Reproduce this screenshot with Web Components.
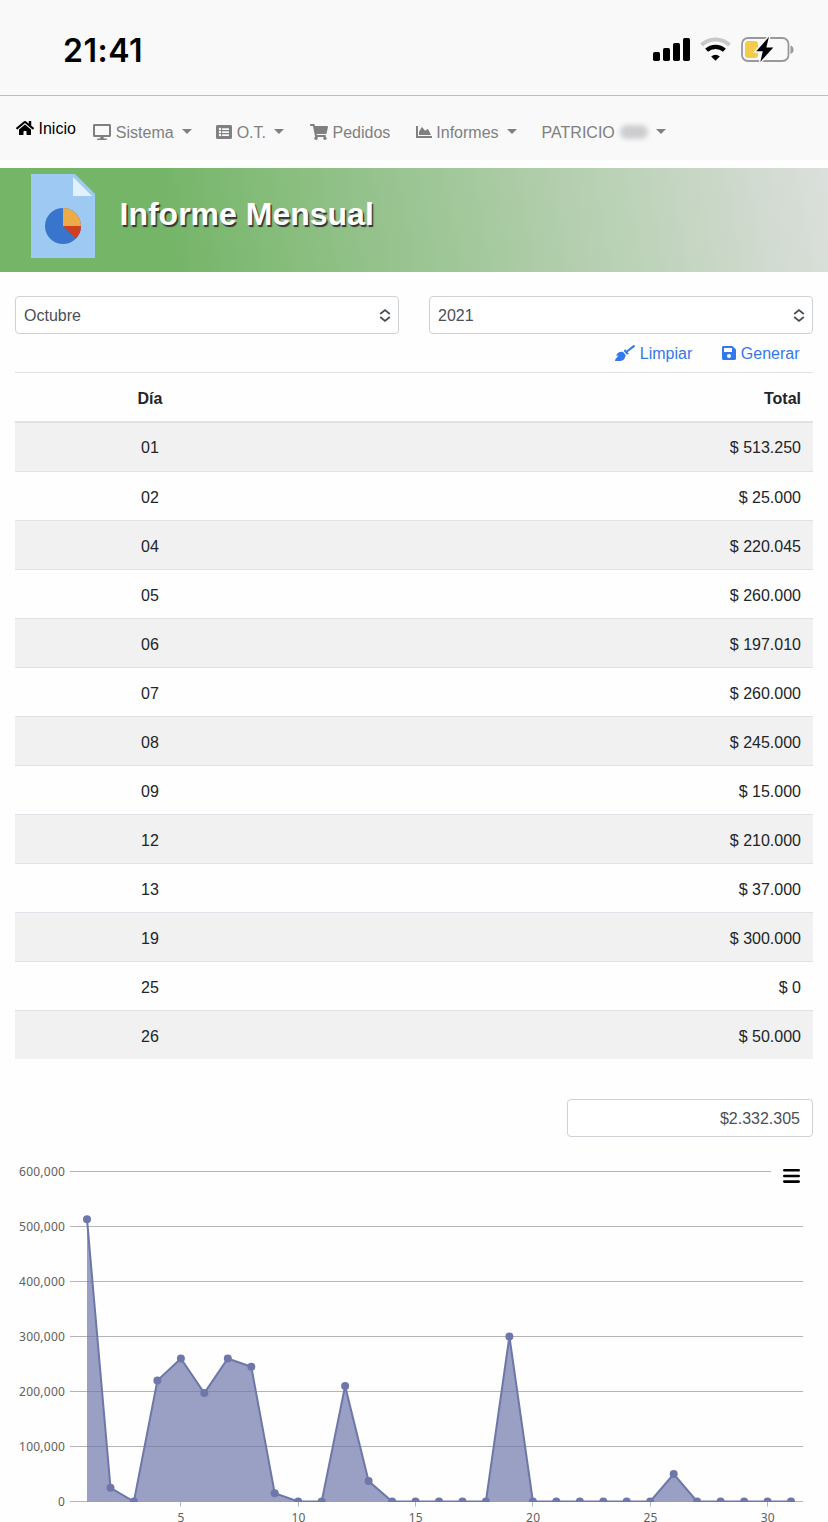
<!DOCTYPE html>
<html lang="es">
<head>
<meta charset="UTF-8">
<meta name="viewport" content="width=device-width, initial-scale=1">
<title>Informe Mensual</title>
<style>
  body {
    margin: 0;
    background: #fefefe;
    color: #212529;
    font-family: "Liberation Sans", Arial, sans-serif;
    font-size: 16px;
    line-height: 24px;
    overflow: hidden;
  }
  main {
    padding: 24px 15px 0;
  }
  .filters {
    display: grid;
    grid-template-columns: 1fr 1fr;
    gap: 30px;
  }
  .actions {
    display: flex;
    justify-content: flex-end;
    gap: 30px;
    height: 38px;
    padding-right: 13.5px;
  }
  .total {
    display: flex;
    justify-content: flex-end;
    padding-top: 40px;
  }
  .total total-field {
    width: 246px;
  }
</style>
</head>
<body>
  <status-bar time="21:41"></status-bar>

  <app-nav>
    <nav-item icon="home" active>Inicio</nav-item>
    <nav-item icon="desktop" dropdown style="margin-left: 17.5px">Sistema</nav-item>
    <nav-item icon="list" dropdown style="margin-left: 24.5px">O.T.</nav-item>
    <nav-item icon="cart" style="margin-left: 26px">Pedidos</nav-item>
    <nav-item icon="chart" style="margin-left: 25.5px" dropdown>Informes</nav-item>
    <nav-item dropdown masked style="margin-left: 25px">PATRICIO</nav-item>
  </app-nav>

  <page-banner>Informe Mensual</page-banner>

  <main>
    <div class="filters">
      <select-field>Octubre</select-field>
      <select-field>2021</select-field>
    </div>
    <div class="actions">
      <action-link icon="broom">Limpiar</action-link>
      <action-link icon="save">Generar</action-link>
    </div>
    <report-table></report-table>
    <div class="total"><total-field>$2.332.305</total-field></div>
  </main>
  <area-chart></area-chart>

<script>
const REPORT = [
  ["01", 513250], ["02", 25000], ["04", 220045], ["05", 260000], ["06", 197010],
  ["07", 260000], ["08", 245000], ["09", 15000], ["12", 210000], ["13", 37000],
  ["19", 300000], ["25", 0], ["26", 50000]
];

const ICONS = {
  home: { w: 18, h: 16, box: "0 0 576 512", d: "M280.4 148.3L96 300.1V464a16 16 0 0 0 16 16l112.1-.3a16 16 0 0 0 15.9-16V368a16 16 0 0 1 16-16h64a16 16 0 0 1 16 16v95.6a16 16 0 0 0 16 16.1L464 480a16 16 0 0 0 16-16V300L295.7 148.3a12.2 12.2 0 0 0-15.3 0zM571.6 251.5L488 182.6V44a12 12 0 0 0-12-12h-56a12 12 0 0 0-12 12v72.6l-89.5-73.6a48 48 0 0 0-61 0L4.3 251.5a12 12 0 0 0-1.6 16.9l25.5 31a12 12 0 0 0 16.9 1.6L280.4 107.2a12.2 12.2 0 0 1 15.3 0L530.9 301a12 12 0 0 0 16.9-1.6l25.5-31a12 12 0 0 0-1.7-16.9z" },
  desktop: { w: 18, h: 16, box: "0 0 576 512", d: "M528 0H48C21.5 0 0 21.5 0 48v320c0 26.5 21.5 48 48 48h192l-16 48h-72c-13.3 0-24 10.7-24 24s10.7 24 24 24h272c13.3 0 24-10.7 24-24s-10.7-24-24-24h-72l-16-48h192c26.5 0 48-21.5 48-48V48c0-26.5-21.5-48-48-48zm-16 352H64V64h448v288z" },
  list: { w: 16, h: 16, box: "0 0 512 512", d: "M464 480H48c-26.5 0-48-21.5-48-48V80c0-26.5 21.5-48 48-48h416c26.5 0 48 21.5 48 48v352c0 26.5-21.5 48-48 48zM128 120a40 40 0 1 0 0 80 40 40 0 0 0 0-80zm0 96a40 40 0 1 0 0 80 40 40 0 0 0 0-80zm0 96a40 40 0 1 0 0 80 40 40 0 0 0 0-80zm288-136v-32a12 12 0 0 0-12-12H204a12 12 0 0 0-12 12v32a12 12 0 0 0 12 12h200a12 12 0 0 0 12-12zm0 96v-32a12 12 0 0 0-12-12H204a12 12 0 0 0-12 12v32a12 12 0 0 0 12 12h200a12 12 0 0 0 12-12zm0 96v-32a12 12 0 0 0-12-12H204a12 12 0 0 0-12 12v32a12 12 0 0 0 12 12h200a12 12 0 0 0 12-12z" },
  cart: { w: 18, h: 16, box: "0 0 576 512", d: "M528.1 301.3l47.3-208C578.8 78.3 567.4 64 552 64H159.2l-9.2-44.8C147.8 8 137.9 0 126.5 0H24C10.7 0 0 10.7 0 24v16c0 13.3 10.7 24 24 24h69.9l70.2 343.4C147.3 417.1 136 435.2 136 456c0 30.9 25.1 56 56 56s56-25.1 56-56c0-15.7-6.4-29.8-16.8-40h209.6C430.4 426.2 424 440.3 424 456c0 30.9 25.1 56 56 56s56-25.1 56-56c0-22.2-12.9-41.3-31.6-50.4l5.5-24.3c3.4-15-8-29.3-23.4-29.3H218.1l-6.5-32h293.1c11.2 0 20.9-7.8 23.4-18.7z" },
  chart: { w: 16, h: 16, box: "0 0 512 512", d: "M500 384c6.6 0 12 5.4 12 12v40c0 6.6-5.4 12-12 12H12c-6.6 0-12-5.4-12-12V76c0-6.6 5.4-12 12-12h40c6.6 0 12 5.4 12 12v308h436zM372.7 159.5L288 216l-85.3-113.7c-5.1-6.8-15.5-6.3-19.9 1L96 248v104h384l-89.9-187.8c-3.2-6.5-11.4-8.7-17.4-4.7z" },
  broom: { w: 20, h: 16, box: "0 0 640 512", d: "M256.5 216.8l86.7 109.2s-16.6 102.3-76.6 150.1C206.7 523.8 0 510.2 0 510.2s3.8-23.1 11-55.4l94.6-112.2c4-4.7-.9-11.6-6.6-9.5l-60.4 22.1c14.4-41.7 32.7-80 54.6-97.5 59.9-47.7 163.3-40.9 163.3-40.9zM636.5 31l-19.8-25c-5.5-6.9-15.5-8.1-22.4-2.6l-232.5 177.8-34.1-42.9c-5.1-6.4-15.2-5.2-18.6 2.2l-25.3 54.5 86.7 109.2 58.8-12.4c8-1.7 11.4-11.2 6.3-17.6l-34.1-42.9L634 53.5c6.9-5.5 8-15.6 2.5-22.5z" },
  save: { w: 14, h: 16, box: "0 0 448 512", d: "M433.9 129.9l-83.9-83.9A48 48 0 0 0 316.1 32H48C21.5 32 0 53.5 0 80v352c0 26.5 21.5 48 48 48h352c26.5 0 48-21.5 48-48V163.9a48 48 0 0 0-14.1-34zM224 416c-35.3 0-64-28.7-64-64s28.7-64 64-64 64 28.7 64 64-28.7 64-64 64zm96-304.5V212c0 6.6-5.4 12-12 12H76c-6.6 0-12-5.4-12-12V108c0-6.6 5.4-12 12-12h228.5c3.2 0 6.2 1.3 8.5 3.5l3.5 3.5a12 12 0 0 1 3.5 8.5z" }
};

function iconSvg(name) {
  const i = ICONS[name];
  if (!i) return "";
  return `<svg width="${i.w}" height="${i.h}" viewBox="${i.box}" fill="currentColor" aria-hidden="true"><path d="${i.d}"/></svg>`;
}

class StatusBar extends HTMLElement {
  constructor() {
    super();
    const shadow = this.attachShadow({ mode: "open" });
    shadow.innerHTML = `
      <style>
        :host {
          display: flex;
          box-sizing: border-box;
          height: 96px;
          padding: 4px 34px 0 63px;
          align-items: center;
          justify-content: space-between;
          background: #f9f9f9;
          border-bottom: 1px solid #bcbdc1;
          color: #000;
        }
        .time {
          padding-top: 2px;
          font: 600 32px/40px Inter, sans-serif;
          letter-spacing: 0.5px;
        }
        .icons {
          display: flex;
          align-items: center;
        }
        svg { display: block; }
      </style>
      <span class="time">${this.getAttribute("time")}</span>
      <div class="icons">
        <svg width="142" height="28" viewBox="0 0 142 28">
          <rect x="1" y="16" width="7" height="9" rx="1.7"/>
          <rect x="11" y="12" width="7" height="13" rx="1.7"/>
          <rect x="21" y="7" width="7" height="18" rx="1.7"/>
          <rect x="31" y="2" width="7" height="23" rx="1.7"/>
          <g fill="none" stroke="#000" stroke-width="4.2">
            <path stroke="#c8c8c9" d="M49.5 9.1a20.3 20.3 0 0 1 28 0"/>
            <path d="M54.6 14.3a13 13 0 0 1 17.8 0"/>
          </g>
          <path d="M63.5 24.7l-4.3-4.3a6.2 6.2 0 0 1 8.6 0z"/>
          <rect x="90" y="2" width="46.5" height="23" rx="6" fill="none" stroke="#98989d" stroke-width="1.8"/>
          <path d="M138.500 9.500q3 1 3 4.200t-3 4.200z" fill="#98989d"/>
          <rect x="93" y="5" width="13" height="17" rx="3" fill="#f5cb4a"/>
          <path d="M117 .8L104.2 15.2h6.6L108.3 26 121.3 11.4h-7z" stroke="#f9f9f9" stroke-width="3"/>
          <path d="M117 .8L104.2 15.2h6.6L108.3 26 121.3 11.4h-7z"/>
        </svg>
      </div>
    `;
  }
}
customElements.define("status-bar", StatusBar);

class AppNav extends HTMLElement {
  constructor() {
    super();
    const shadow = this.attachShadow({ mode: "open" });
    shadow.innerHTML = `
      <style>
        :host {
          display: flex;
          box-sizing: border-box;
          height: 64px;
          margin-bottom: 8px;
          padding: 0 16px;
          align-items: flex-start;
          background: #f9f9f9;
        }
      </style>
      <slot></slot>
    `;
  }
}
customElements.define("app-nav", AppNav);

class NavItem extends HTMLElement {
  constructor() {
    super();
    const shadow = this.attachShadow({ mode: "open" });
    shadow.innerHTML = `
      <style>
        :host {
          display: flex;
          align-items: center;
          padding-top: 24px;
          color: #808080;
          white-space: nowrap;
        }
        :host([active]) {
          padding-top: 20px;
          color: #000;
        }
        svg { margin-right: 4.5px; }
        .label {
          padding-top: 1px;
          margin-bottom: -1px;
        }
        .caret {
          margin-left: 8px;
          margin-bottom: 1px;
          border-top: 5px solid currentColor;
          border-left: 5px solid transparent;
          border-right: 5px solid transparent;
        }
        .mask {
          width: 28px;
          height: 14px;
          margin: 0 2px 0 5px;
          border-radius: 7px;
          background: #cdcdcf;
          filter: blur(2.5px);
        }
        .mask + .caret { margin-left: 6px; }
      </style>
      ${iconSvg(this.getAttribute("icon"))}
      <span class="label"><slot></slot></span>
      ${this.hasAttribute("masked") ? '<span class="mask"></span>' : ""}
      ${this.hasAttribute("dropdown") ? '<span class="caret"></span>' : ""}
    `;
  }
}
customElements.define("nav-item", NavItem);

class PageBanner extends HTMLElement {
  constructor() {
    super();
    const shadow = this.attachShadow({ mode: "open" });
    shadow.innerHTML = `
      <style>
        :host {
          display: flex;
          box-sizing: border-box;
          height: 104px;
          padding: 6px 31px 0;
          gap: 24.5px;
          align-items: flex-start;
          background: linear-gradient(80deg, #74b567 0%, #74b567 20%, #dcdfdc 100%);
        }
        h1 {
          margin: 20px 0 0;
          color: #fff;
          font-size: 32px;
          line-height: 40px;
          text-shadow: 1.5px 1.5px 1px #333;
        }
      </style>
      <svg width="64" height="84" viewBox="0 0 64 84">
        <path fill="#9dc9f3" d="M0 0h44l20 20v64H0z"/>
        <path fill="#e1f2fd" d="M42 3v19h19z"/>
        <circle cx="32" cy="52" r="18" fill="#3974cd"/>
        <path fill="#ecab45" d="M32 52V34a18 18 0 0 1 18 18z"/>
        <path fill="#cd4024" d="M32 52h18a18 18 0 0 1-5.3 12.7z"/>
      </svg>
      <h1><slot></slot></h1>
    `;
  }
}
customElements.define("page-banner", PageBanner);

class SelectField extends HTMLElement {
  constructor() {
    super();
    const shadow = this.attachShadow({ mode: "open" });
    shadow.innerHTML = `
      <style>
        :host {
          display: flex;
          box-sizing: border-box;
          height: 38px;
          padding: 1px 7px 0 8px;
          align-items: center;
          justify-content: space-between;
          border: 1px solid #ced1d6;
          border-radius: 4px;
          background: #fff;
          color: #495057;
        }
      </style>
      <slot></slot>
      <svg width="12" height="14" viewBox="0 0 12 14" fill="none" stroke="#444a50" stroke-width="1.7">
        <path d="M1.2 5L6 1.2 10.8 5M1.2 8L6 11.8 10.8 8"/>
      </svg>
    `;
  }
}
customElements.define("select-field", SelectField);

class ActionLink extends HTMLElement {
  constructor() {
    super();
    const shadow = this.attachShadow({ mode: "open" });
    shadow.innerHTML = `
      <style>
        :host {
          display: flex;
          align-items: center;
          gap: 4.5px;
          color: #3478ed;
        }
        .label {
          padding-top: 1px;
          margin-bottom: -1px;
        }
      </style>
      ${iconSvg(this.getAttribute("icon"))}
      <span class="label"><slot></slot></span>
    `;
  }
}
customElements.define("action-link", ActionLink);

class ReportTable extends HTMLElement {
  constructor() {
    super();
    const shadow = this.attachShadow({ mode: "open" });
    const money = n => "$ " + String(n).replace(/\B(?=(\d{3})+$)/g, ".");
    shadow.innerHTML = `
      <style>
        :host { display: block; }
        .row {
          display: grid;
          box-sizing: border-box;
          grid-template-columns: 270px 1fr;
          height: 49px;
          padding-top: 14px;
          border-top: 1px solid #dee2e6;
        }
        .row:nth-of-type(even) { background: #f1f1f1; }
        .row span:first-child { text-align: center; }
        .row span:last-child {
          padding-right: 12px;
          text-align: right;
        }
        .head {
          height: 51px;
          font-weight: bold;
          border-bottom: 2px solid #dee2e6;
        }
        .head + .row {
          height: 48px;
          padding-top: 13px;
          border-top: 0;
        }
      </style>
      <div class="row head"><span>Día</span><span>Total</span></div>
      ${REPORT.map(([day, total]) => `<div class="row"><span>${day}</span><span>${money(total)}</span></div>`).join("")}
    `;
  }
}
customElements.define("report-table", ReportTable);

class TotalField extends HTMLElement {
  constructor() {
    super();
    const shadow = this.attachShadow({ mode: "open" });
    shadow.innerHTML = `
      <style>
        :host {
          display: block;
          box-sizing: border-box;
          height: 38px;
          padding: 7px 12px 0;
          border: 1px solid #ced1d6;
          border-radius: 4px;
          background: #fff;
          color: #495057;
          text-align: right;
        }
      </style>
      <slot></slot>
    `;
  }
}
customElements.define("total-field", TotalField);

class AreaChart extends HTMLElement {
  constructor() {
    super();
    const shadow = this.attachShadow({ mode: "open" });

    const base = 364.5;
    const x = day => 87 + (day - 1) * 23.467;
    const y = value => base - value * 55 / 100000;
    const values = Array(31).fill(0);
    REPORT.forEach(([day, total]) => { values[Number(day) - 1] = total; });
    const points = values.map((v, i) => [x(i + 1).toFixed(1), y(v).toFixed(1)]);
    const line = points.map(p => p.join(" ")).join("L");

    let grid = "";
    let labels = "";
    for (let v = 0; v <= 600000; v += 100000) {
      // top line stops short of the menu button
      const end = v === 600000 ? 771 : 803;
      grid += `<path d="M70 ${y(v)}H${end}"/>`;
      labels += `<text x="65.2" y="${y(v) + 4.5}" text-anchor="end">${v.toLocaleString("en-US")}</text>`;
    }
    let ticks = "";
    for (let d = 5; d <= 30; d += 5) {
      const tx = Math.floor(x(d)) + 0.5;
      ticks += `<path d="M${tx} ${base}v5"/>`;
      labels += `<text x="${x(d) + 0.3}" y="385" text-anchor="middle">${d}</text>`;
    }

    shadow.innerHTML = `
      <style>
        :host {
          display: block;
          height: 385px;
          overflow: hidden;
        }
        svg { display: block; }
        text {
          font: 12px "Noto Sans", sans-serif;
          letter-spacing: 0.25px;
          fill: #606060;
        }
      </style>
      <svg width="828" height="385" viewBox="0 0 828 385">
        <defs><clipPath id="plot"><rect x="70" y="20" width="733" height="345"/></clipPath></defs>
        <g stroke="#b4b4b6">${grid}${ticks}</g>
        <g clip-path="url(#plot)">
          <path d="M${x(1)} ${base}L${line}V${base}z" fill="#6e77aa" fill-opacity=".7"/>
          <path d="M${line}" fill="none" stroke="#6e77aa" stroke-width="2"/>
          <g fill="#6e77aa">${points.map(p => `<circle cx="${p[0]}" cy="${p[1]}" r="4"/>`).join("")}</g>
        </g>
        ${labels}
        <path d="M784.3 33.3h14.4M784.3 39h14.4M784.3 44.6h14.4" stroke="#000" stroke-width="2.6" stroke-linecap="round"/>
      </svg>
    `;
  }
}
customElements.define("area-chart", AreaChart);
</script>
</body>
</html>
